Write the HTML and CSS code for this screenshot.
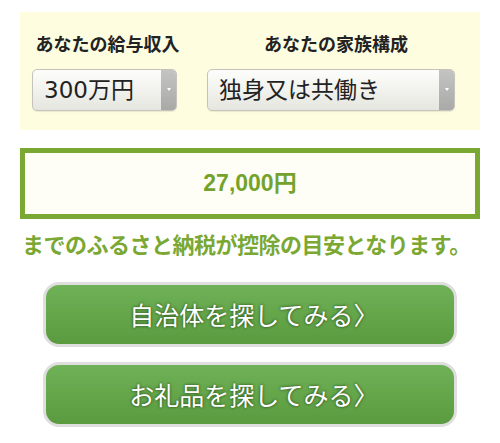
FILE: index.html
```html
<!DOCTYPE html>
<html lang="ja">
<head>
    <meta charset="UTF-8">
    <title>ふるさと納税 控除額シミュレーション</title>
    <link rel="stylesheet" href="styles.css">
</head>
<body>
    <div class="simulator">
        <form class="panel" id="simForm">
            <label class="label" for="income">あなたの給与収入</label>
            <label class="label label-family" for="family">あなたの家族構成</label>

            <div class="select">
                <select id="income" name="income">
                    <option>300万円</option>
                    <option>400万円</option>
                    <option>500万円</option>
                </select>
            </div>
            <div class="select">
                <select id="family" name="family">
                    <option>独身又は共働き</option>
                    <option>夫婦</option>
                    <option>夫婦子1人</option>
                </select>
            </div>
        </form>

        <div class="result" id="result">27,000円</div>
        <p class="note">までのふるさと納税が控除の目安となります。</p>

        <a class="btn" href="#">自治体を探してみる〉</a>
        <a class="btn" href="#">お礼品を探してみる〉</a>
    </div>
</body>
</html>
```

FILE: styles.css
```css
/* Simulator layout */
body {
    margin: 0;
    font-family: "DejaVu Sans", "Noto Sans CJK JP", sans-serif;
    background: #fff;
}

.simulator {
    padding: 12px 20px;
}

.panel {
    display: grid;
    grid-template-columns: 145px 248px;
    column-gap: 30px;
    row-gap: 12px;
    padding: 21px 25px 19px 12px;
    background-color: #fefde0;
}

.label {
    justify-self: center;
    white-space: nowrap;
    font-size: 18px;
    font-weight: bold;
    line-height: 24px;
    color: #222;
    margin-left: 6px;
}

.label-family {
    margin-left: 10px;
}

.select {
    position: relative;
    height: 42px;
}

.select select {
    appearance: none;
    -webkit-appearance: none;
    width: 100%;
    height: 42px;
    margin: 0;
    padding: 0 24px 0 11px;
    font-family: "DejaVu Sans", "Noto Sans CJK JP", sans-serif;
    font-size: 23px;
    color: #222;
    border: 1px solid #c4c4bc;
    border-radius: 5px;
    background: linear-gradient(#fdfdfb, #e6e6e0);
    box-shadow: 0 1px 1px rgba(0, 0, 0, 0.08);
}

/* gray arrow column on the right of the select */
.select::after {
    content: "";
    position: absolute;
    top: 1px;
    right: 1px;
    bottom: 1px;
    width: 15px;
    border-radius: 0 4px 4px 0;
    background: linear-gradient(#c4c4c2, #a9a9a7);
    pointer-events: none;
}

.select::before {
    content: "";
    position: absolute;
    z-index: 1;
    top: 19px;
    right: 6px;
    border-left: 2px solid transparent;
    border-right: 2px solid transparent;
    border-top: 3px solid #fff;
    pointer-events: none;
}

.result {
    margin-top: 18px;
    height: 61px;
    line-height: 61px;
    border: 5px solid #7aa832;
    background-color: #fefef6;
    text-align: center;
    font-family: "Liberation Sans", "Noto Sans CJK JP", sans-serif;
    font-size: 23px;
    font-weight: bold;
    color: #74a32d;
}

.note {
    margin: 9px 0 0;
    line-height: 30px;
    font-family: "Noto Sans CJK JP", sans-serif;
    font-size: 22px;
    font-weight: bold;
    color: #7aa832;
    padding-left: 2px;
    letter-spacing: -0.5px;
}

.btn {
    display: block;
    width: 400px;
    height: 59px;
    margin: 24px auto 0;
    border: 3px solid #dedede;
    border-radius: 16px;
    background: linear-gradient(#6fb157, #5b9b3f);
    text-align: center;
    line-height: 59px;
    font-family: "Noto Sans CJK JP", sans-serif;
    font-size: 25px;
    color: #fff;
    text-decoration: none;
    text-shadow: 0 0 3px rgba(20, 50, 10, 0.9);
    padding-left: 8px;
    box-sizing: content-box;
}

.btn + .btn {
    margin-top: 15px;
}
```
